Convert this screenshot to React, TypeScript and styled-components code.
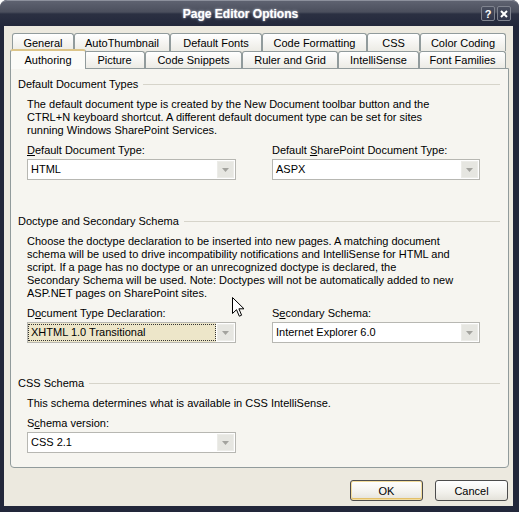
import React from 'react'
import styled, { createGlobalStyle } from 'styled-components'

const GlobalStyle = createGlobalStyle`
  html, body {
    margin: 0;
    padding: 0;
    background: #ffffff;
  }
  body {
    width: 519px;
    height: 512px;
    overflow: hidden;
    font-family: 'Liberation Sans', Arial, sans-serif;
    font-size: 11px;
    color: #000;
  }
`

const Frame = styled.div`
  position: relative;
  width: 519px;
  height: 512px;
  background: #22273a;
  border-radius: 7px 7px 0 0;
  display: flex;
  flex-direction: column;
  overflow: hidden;
`

const TitleBar = styled.div`
  height: 26px;
  flex: none;
  box-sizing: border-box;
  display: flex;
  align-items: center;
  padding-right: 8px;
  border-top: 1px solid #8c909c;
  border-radius: 7px 7px 0 0;
  background: linear-gradient(
    #5e6270 0,
    #4b4f5d 11px,
    #2b3042 13px,
    #22273a 26px
  );
`

const Title = styled.div`
  flex: 1;
  text-align: center;
  color: #fff;
  font-weight: bold;
  font-size: 12px;
  text-shadow: 0 0 3px #a9aebb, 0 0 1px #c8ccd6;
`

const TitleButtons = styled.div`
  display: flex;
  gap: 2px;
`

const TitleButton = styled.div`
  width: 14px;
  height: 15px;
  box-sizing: border-box;
  border: 1px solid #80848f;
  border-radius: 2px;
  background: linear-gradient(#4a4f5f, #30354a);
  color: #fff;
  font-weight: bold;
  font-size: 11px;
  display: flex;
  align-items: center;
  justify-content: center;
`

const Client = styled.div`
  flex: 1;
  margin: 0 6px 6px 4px;
  padding: 7px 4px 0 6px;
  background: #ece9df;
  display: flex;
  flex-direction: column;
`

const TabRows = styled.div`
  margin-left: 2px;
  width: 494px;
`

const TabRow = styled.div<{ h: number }>`
  display: flex;
  align-items: flex-end;
  height: ${p => p.h}px;
`

const Tab = styled.div<{ w: number }>`
  width: ${p => p.w}px;
  height: 100%;
  flex: none;
  box-sizing: border-box;
  border: 1px solid #919b9c;
  border-bottom: none;
  border-radius: 3px 3px 0 0;
  background: linear-gradient(#ffffff, #ecebe5);
  display: flex;
  align-items: center;
  justify-content: center;
  white-space: nowrap;
`

const ActiveTab = styled(Tab)`
  width: ${p => p.w + 4}px;
  height: 20px;
  margin: 0 -2px;
  position: relative;
  top: 1px;
  z-index: 1;
  border-top: 2px solid #dcc58a;
  background: #fbfbf8;
  padding-bottom: 1px;
`

const Panel = styled.div`
  height: 400px;
  flex: none;
  box-sizing: border-box;
  border: 1px solid #919b9c;
  border-radius: 0 0 4px 4px;
  background: #f6f5f0;
  padding: 9px 8px 0 7px;
`

const Group = styled.div<{ gap: number }>`
  margin-top: ${p => p.gap}px;
`

const GroupHeader = styled.div`
  display: flex;
  align-items: center;
  gap: 5px;
  line-height: 13px;
  &::after {
    content: '';
    flex: 1;
    height: 1px;
    background: #d6d4ca;
  }
`

const GroupBody = styled.div`
  padding-left: 9px;
`

const Desc = styled.div`
  margin-top: 7px;
  line-height: 13px;
  white-space: nowrap;
`

const FieldGrid = styled.div`
  display: grid;
  grid-template-columns: 209px 208px;
  column-gap: 36px;
  margin-top: 7px;
`

const FieldLabel = styled.div`
  line-height: 13px;
  margin-bottom: 2px;
  u {
    text-decoration: underline;
  }
`

const Combo = styled.div`
  height: 21px;
  box-sizing: border-box;
  border: 1px solid #b7b7b2;
  background: #fff;
  display: flex;
`

const ComboValue = styled.div<{ focused?: boolean }>`
  flex: 1;
  display: flex;
  align-items: center;
  padding: 1px;
  background: ${p => (p.focused ? '#ede6c9' : '#fff')};
  span {
    flex: 1;
    padding-left: 2px;
    line-height: 15px;
    outline: ${p => (p.focused ? '1px dotted #333' : 'none')};
    outline-offset: 0;
  }
`

const ComboButton = styled.div`
  width: 17px;
  flex: none;
  margin: 1px;
  background: #e6e6e1;
  border: 1px solid #ecece8;
  box-sizing: border-box;
  display: flex;
  align-items: center;
  justify-content: center;
`

const ButtonRow = styled.div`
  display: flex;
  justify-content: flex-end;
  gap: 12px;
  margin-top: 12px;
  padding-right: 1px;
`

const DialogButton = styled.div<{ isDefault?: boolean }>`
  width: 73px;
  height: 21px;
  box-sizing: border-box;
  border: 1px solid #4c4c4c;
  border-radius: 3px;
  background: linear-gradient(#ffffff, #f2f1ec 60%, #e4e2da);
  box-shadow: ${p =>
    p.isDefault ? 'inset 0 0 0 1px #f2dc9c, inset 0 -1px 0 1px #e3c06a' : 'none'};
  display: flex;
  align-items: center;
  justify-content: center;
`

const Pointer = styled.svg`
  position: absolute;
  left: 232px;
  top: 297px;
`

const Arrow = () => (
  <svg width="7" height="4" viewBox="0 0 7 4">
    <path d="M0 0H7L3.5 4Z" fill="#a3a39e" />
  </svg>
)

const ComboBox = ({ value, focused }: { value: string; focused?: boolean }) => (
  <Combo>
    <ComboValue focused={focused}>
      <span>{value}</span>
    </ComboValue>
    <ComboButton>
      <Arrow />
    </ComboButton>
  </Combo>
)

const row1 = [
  { label: 'General', w: 62 },
  { label: 'AutoThumbnail', w: 96 },
  { label: 'Default Fonts', w: 92 },
  { label: 'Code Formatting', w: 105 },
  { label: 'CSS', w: 53 },
  { label: 'Color Coding', w: 86 },
]

const row2 = [
  { label: 'Authoring', w: 72 },
  { label: 'Picture', w: 61 },
  { label: 'Code Snippets', w: 97 },
  { label: 'Ruler and Grid', w: 96 },
  { label: 'IntelliSense', w: 81 },
  { label: 'Font Families', w: 87 },
]

export default function App() {
  return (
    <>
      <GlobalStyle />
      <Frame>
        <TitleBar>
          <Title>Page Editor Options</Title>
          <TitleButtons>
            <TitleButton>?</TitleButton>
            <TitleButton>
              <svg width="8" height="8" viewBox="0 0 8 8">
                <path d="M1 1L7 7M7 1L1 7" stroke="#fff" strokeWidth="2" />
              </svg>
            </TitleButton>
          </TitleButtons>
        </TitleBar>
        <Client>
          <TabRows>
            <TabRow h={18}>
              {row1.map(t => (
                <Tab key={t.label} w={t.w}>
                  {t.label}
                </Tab>
              ))}
            </TabRow>
            <TabRow h={17}>
              {row2.map((t, i) =>
                i === 0 ? (
                  <ActiveTab key={t.label} w={t.w}>
                    {t.label}
                  </ActiveTab>
                ) : (
                  <Tab key={t.label} w={t.w}>
                    {t.label}
                  </Tab>
                )
              )}
            </TabRow>
          </TabRows>
          <Panel>
            <Group gap={0}>
              <GroupHeader>Default Document Types</GroupHeader>
              <GroupBody>
                <Desc>
                  The default document type is created by the New Document toolbar button and the
                  <br />
                  CTRL+N keyboard shortcut. A different default document type can be set for sites
                  <br />
                  running Windows SharePoint Services.
                </Desc>
                <FieldGrid>
                  <div>
                    <FieldLabel>
                      <u>D</u>efault Document Type:
                    </FieldLabel>
                    <ComboBox value="HTML" />
                  </div>
                  <div>
                    <FieldLabel>
                      Default <u>S</u>harePoint Document Type:
                    </FieldLabel>
                    <ComboBox value="ASPX" />
                  </div>
                </FieldGrid>
              </GroupBody>
            </Group>
            <Group gap={35}>
              <GroupHeader>Doctype and Secondary Schema</GroupHeader>
              <GroupBody>
                <Desc>
                  Choose the doctype declaration to be inserted into new pages. A matching document
                  <br />
                  schema will be used to drive incompatibility notifications and IntelliSense for HTML and
                  <br />
                  script. If a page has no doctype or an unrecognized doctype is declared, the
                  <br />
                  Secondary Schema will be used. Note: Doctypes will not be automatically added to new
                  <br />
                  ASP.NET pages on SharePoint sites.
                </Desc>
                <FieldGrid>
                  <div>
                    <FieldLabel>
                      D<u>o</u>cument Type Declaration:
                    </FieldLabel>
                    <ComboBox value="XHTML 1.0 Transitional" focused />
                  </div>
                  <div>
                    <FieldLabel>
                      S<u>e</u>condary Schema:
                    </FieldLabel>
                    <ComboBox value="Internet Explorer 6.0" />
                  </div>
                </FieldGrid>
              </GroupBody>
            </Group>
            <Group gap={34}>
              <GroupHeader>CSS Schema</GroupHeader>
              <GroupBody>
                <Desc>This schema determines what is available in CSS IntelliSense.</Desc>
                <FieldGrid>
                  <div>
                    <FieldLabel>
                      S<u>c</u>hema version:
                    </FieldLabel>
                    <ComboBox value="CSS 2.1" />
                  </div>
                </FieldGrid>
              </GroupBody>
            </Group>
          </Panel>
          <ButtonRow>
            <DialogButton isDefault>OK</DialogButton>
            <DialogButton>Cancel</DialogButton>
          </ButtonRow>
        </Client>
        <Pointer width="13" height="21" viewBox="0 0 13 21">
          <path
            d="M0.5 0.5V16.5L4.5 12.7L7.3 19.2L9.6 18.2L6.9 11.8H12Z"
            fill="#fff"
            stroke="#000"
            strokeWidth="1"
          />
        </Pointer>
      </Frame>
    </>
  )
}
